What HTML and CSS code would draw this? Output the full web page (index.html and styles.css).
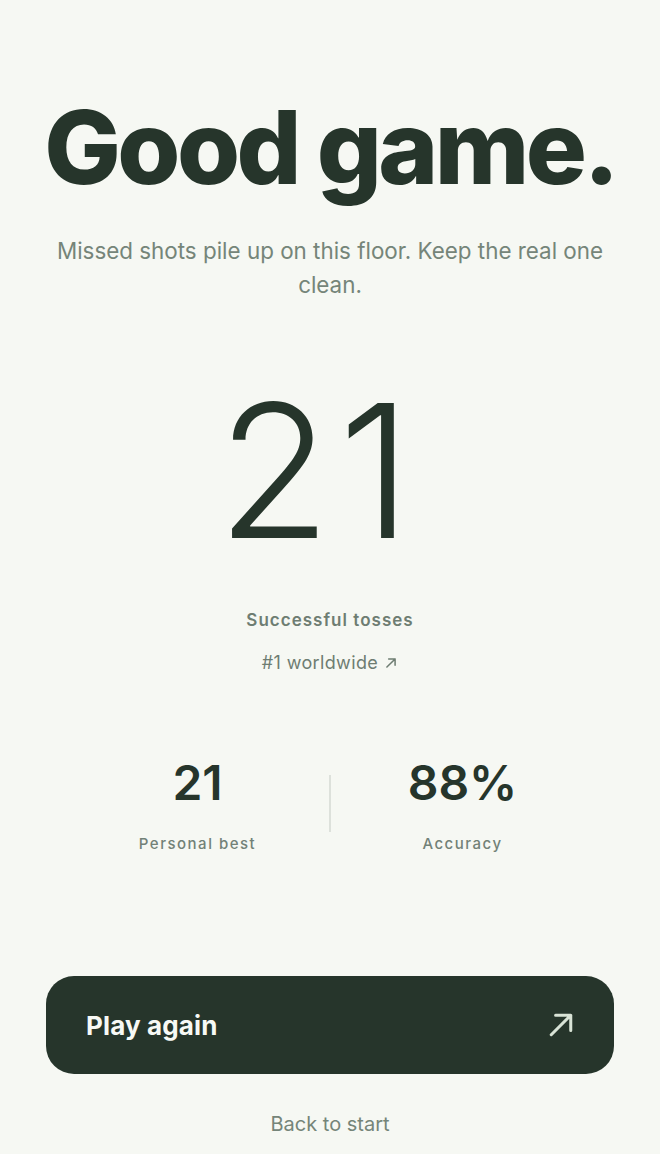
FILE: index.html
```html
<!DOCTYPE html>
<html lang="en">

<head>
  <meta charset="UTF-8">
  <meta name="viewport" content="width=device-width, initial-scale=1.0">
  <title>Game over</title>
  <link rel="stylesheet" href="styles.css">
</head>

<body>
  <main class="result">
    <h1 class="result-title">Good game.</h1>
    <p class="result-note">Missed shots pile up on this floor. Keep the real one clean.</p>

    <div class="score">
      <div class="score-value">21</div>
      <div class="score-label">Successful tosses</div>
      <a class="score-rank" href="#">#1 worldwide
        <svg viewBox="0 0 12 12" width="14" height="14" aria-hidden="true">
          <path d="M2.5 9.5L9.5 2.5M4 2.5h5.5V8" fill="none" stroke="currentColor" stroke-width="1.3" stroke-linecap="round" stroke-linejoin="round" />
        </svg>
      </a>
    </div>

    <div class="stats">
      <div class="stat">
        <div class="stat-value">21</div>
        <div class="stat-label">Personal best</div>
      </div>
      <div class="stat-divider"></div>
      <div class="stat">
        <div class="stat-value">88%</div>
        <div class="stat-label">Accuracy</div>
      </div>
    </div>

    <div class="actions">
      <button class="play-btn" type="button">
        <span>Play again</span>
        <svg viewBox="0 0 24 24" width="26" height="26" aria-hidden="true">
          <path d="M3 21L21 3M7 3h14v14" fill="none" stroke="currentColor" stroke-width="2.8" stroke-linecap="round" stroke-linejoin="round" />
        </svg>
      </button>
      <a class="back-link" href="#">Back to start</a>
    </div>
  </main>
</body>

</html>
```

FILE: styles.css
```css
* {
  box-sizing: border-box;
}

body {
  margin: 0;
  background: #f6f8f3;
  color: #26352b;
  font-family: Inter, "Noto Sans", sans-serif;
}

.result {
  display: flex;
  flex-direction: column;
  align-items: center;
  padding: 96px 46px 0;
  text-align: center;
}

.result-title {
  margin: 0 -20px;
  font-size: 102px;
  font-weight: 800;
  line-height: 1;
  letter-spacing: -0.035em;
  white-space: nowrap;
}

.result-note {
  margin: 36px 0 0;
  max-width: 560px;
  font-size: 22.4px;
  line-height: 34px;
  color: #758579;
}

.score {
  display: flex;
  flex-direction: column;
  align-items: center;
  margin-top: 76px;
}

.score-value {
  padding-right: 24px;
  font-size: 186px;
  font-weight: 300;
  line-height: 1;
  letter-spacing: 0.04em;
}

.score-label {
  margin-top: 46px;
  font-size: 17px;
  font-weight: 600;
  letter-spacing: 0.06em;
  color: #6e7d72;
}

.score-rank {
  display: flex;
  align-items: center;
  gap: 6px;
  margin-top: 22px;
  font-size: 18px;
  letter-spacing: 0.02em;
  color: #6e7d72;
  text-decoration: none;
}

.stats {
  display: flex;
  align-items: center;
  width: 528px;
  margin-top: 86px;
}

.stat {
  flex: 1;
  display: flex;
  flex-direction: column;
  align-items: center;
}

.stat-value {
  font-size: 48px;
  font-weight: 600;
  line-height: 1;
}

.stat-label {
  margin-top: 27px;
  font-size: 15px;
  font-weight: 500;
  letter-spacing: 0.1em;
  color: #728177;
}

.stat-divider {
  width: 2px;
  height: 57px;
  margin-bottom: 6px;
  background: #dde1db;
}

.actions {
  display: flex;
  flex-direction: column;
  align-items: center;
  width: 100%;
  margin-top: 123px;
}

.play-btn {
  display: flex;
  align-items: center;
  justify-content: space-between;
  width: 100%;
  height: 98px;
  padding: 0 40px;
  border: none;
  border-radius: 28px;
  background: #26352b;
  color: #f7f9f5;
  font-family: Inter, sans-serif;
  font-size: 26px;
  font-weight: 700;
  letter-spacing: 0.005em;
  cursor: pointer;
}

.play-btn svg {
  color: #d8e3d6;
}

.back-link {
  margin-top: 38px;
  font-size: 20px;
  color: #758579;
  text-decoration: none;
}
```
